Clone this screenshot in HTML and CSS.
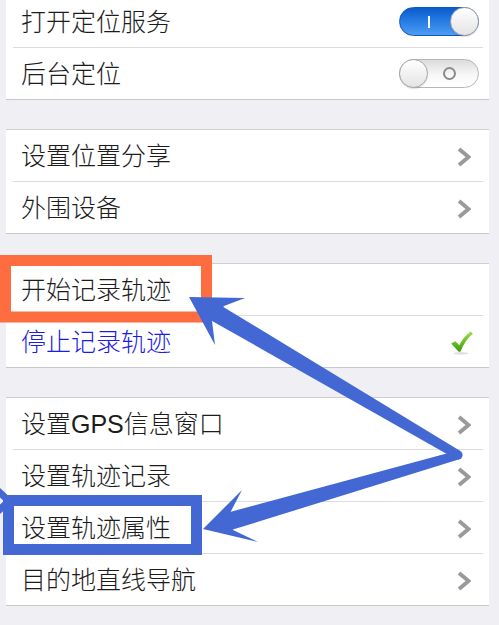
FILE: index.html
```html
<!DOCTYPE html>
<html lang="zh-CN">
<head>
<meta charset="utf-8">
<title>定位设置</title>
<link rel="stylesheet" href="styles.css">
</head>
<body>
<div class="page">
  <section class="group group-first">
    <div class="row">
      <span class="label">打开定位服务</span>
      <span class="switch on"><span class="mark-i"></span><span class="knob"></span></span>
    </div>
    <div class="row">
      <span class="label">后台定位</span>
      <span class="switch off"><span class="knob"></span><span class="mark-o"></span></span>
    </div>
  </section>

  <section class="group">
    <div class="row">
      <span class="label">设置位置分享</span>
      <svg class="chev" viewBox="0 0 14 20" width="14" height="20"><polyline points="2,2 11.5,10 2,18"/></svg>
    </div>
    <div class="row">
      <span class="label">外围设备</span>
      <svg class="chev" viewBox="0 0 14 20" width="14" height="20"><polyline points="2,2 11.5,10 2,18"/></svg>
    </div>
  </section>

  <section class="group">
    <div class="row">
      <span class="label">开始记录轨迹</span>
    </div>
    <div class="row">
      <span class="label label-blue">停止记录轨迹</span>
      <svg class="check" viewBox="0 0 22 22" width="24" height="24">
        <defs>
          <linearGradient id="gck" x1="0" y1="0" x2="0" y2="1">
            <stop offset="0" stop-color="#9fe04a"/>
            <stop offset="1" stop-color="#3a9d0c"/>
          </linearGradient>
        </defs>
        <ellipse cx="10" cy="20.5" rx="7" ry="1.2" fill="#000" opacity="0.12"/>
        <path d="M1,11.5 L5,9.5 L8.5,13 C11,8 14.5,3.5 19,0.5 L21,2.5 C16,6.5 12.5,12 9.5,19 L8,19 Z" fill="url(#gck)"/>
      </svg>
    </div>
  </section>

  <section class="group">
    <div class="row">
      <span class="label">设置GPS信息窗口</span>
      <svg class="chev" viewBox="0 0 14 20" width="14" height="20"><polyline points="2,2 11.5,10 2,18"/></svg>
    </div>
    <div class="row">
      <span class="label">设置轨迹记录</span>
      <svg class="chev" viewBox="0 0 14 20" width="14" height="20"><polyline points="2,2 11.5,10 2,18"/></svg>
    </div>
    <div class="row">
      <span class="label">设置轨迹属性</span>
      <svg class="chev" viewBox="0 0 14 20" width="14" height="20"><polyline points="2,2 11.5,10 2,18"/></svg>
    </div>
    <div class="row">
      <span class="label">目的地直线导航</span>
      <svg class="chev" viewBox="0 0 14 20" width="14" height="20"><polyline points="2,2 11.5,10 2,18"/></svg>
    </div>
  </section>

  <svg class="annot" viewBox="0 0 499 625" width="499" height="625">
    <rect x="5.5" y="260.5" width="201" height="56.5" fill="none" stroke="#fe6d40" stroke-width="11"/>
    <rect x="8.5" y="500.5" width="188" height="49" fill="none" stroke="#4368d4" stroke-width="11"/>
    <g fill="#4368d4">
      <polygon points="205.9,317.5 215.1,301.9 460.3,451.1 455.7,458.9"/>
      <polygon points="189,297 245,298 224,306 212,321 215,345"/>
      <polygon points="229.5,530.6 224.5,513.4 456.7,450.7 459.3,459.3"/>
      <polygon points="203,529 242,490 229,515 233,530 258,542"/>
      <circle cx="458" cy="455" r="4.6"/>
    </g>
    <polyline points="-4,489 9,501 -4,513" fill="none" stroke="#4368d4" stroke-width="7" stroke-linejoin="round" stroke-linecap="round"/>
  </svg>
</div>
</body>
</html>
```

FILE: styles.css
```css
html, body {
  margin: 0;
  padding: 0;
}

body {
  background: #efeff4;
  font-family: "Liberation Sans", "Noto Sans CJK SC", sans-serif;
  color: #1c1c1c;
  overflow: hidden;
}

.page {
  position: relative;
  width: 499px;
  height: 625px;
  overflow: hidden;
  display: flex;
  flex-direction: column;
}

.group {
  background: #fff;
  margin: 29px 10px 0 6px;
  border-top: 1px solid #cfcfd3;
  border-bottom: 1px solid #c8c7cc;
  flex: none;
}

.group-first {
  margin-top: -5px;
}

.row {
  height: 51px;
  margin: 0 6px 0 7px;
  padding: 0 4px 0 8px;
  display: flex;
  align-items: center;
}

.row + .row {
  border-top: 1px solid #dcdcdf;
}

.label {
  font-size: 25px;
  font-weight: 300;
  line-height: 1;
  flex: 1;
  padding-top: 2px;
  white-space: nowrap;
}

.label-blue {
  color: #1c1ce8;
}

.chev {
  flex: none;
  margin-right: 8px;
  margin-top: 3px;
}

.chev polyline {
  fill: none;
  stroke: #9a9a9a;
  stroke-width: 3.8;
}

.check {
  flex: none;
  margin-right: 5px;
  margin-top: 2px;
}

.switch {
  flex: none;
  box-sizing: border-box;
  width: 80px;
  height: 29px;
  border-radius: 15px;
  display: flex;
  align-items: center;
}

.switch.on {
  background: linear-gradient(#0b5bcc, #2a80e6 55%, #4f9cf3);
  border: 1px solid #1257bd;
}

.switch.off {
  background: linear-gradient(#dcdcdc, #f7f7f7 55%, #ffffff);
  border: 1px solid #b7b7b7;
}

.knob {
  box-sizing: border-box;
  width: 29px;
  height: 29px;
  margin: -1px;
  border-radius: 50%;
  background: linear-gradient(#ffffff, #e4e4e4);
  border: 1px solid #a6a6a6;
  box-shadow: 0 1px 1px rgba(0, 0, 0, 0.12);
  flex: none;
}

.switch.on .knob {
  margin-left: auto;
}

.mark-i {
  width: 2px;
  height: 12px;
  background: #fff;
  margin-left: 28px;
  flex: none;
}

.mark-o {
  box-sizing: border-box;
  width: 13px;
  height: 13px;
  border-radius: 50%;
  border: 2px solid #8a8a8a;
  margin-left: auto;
  margin-right: 22px;
  flex: none;
}

.annot {
  position: absolute;
  left: 0;
  top: 0;
  pointer-events: none;
}
```
